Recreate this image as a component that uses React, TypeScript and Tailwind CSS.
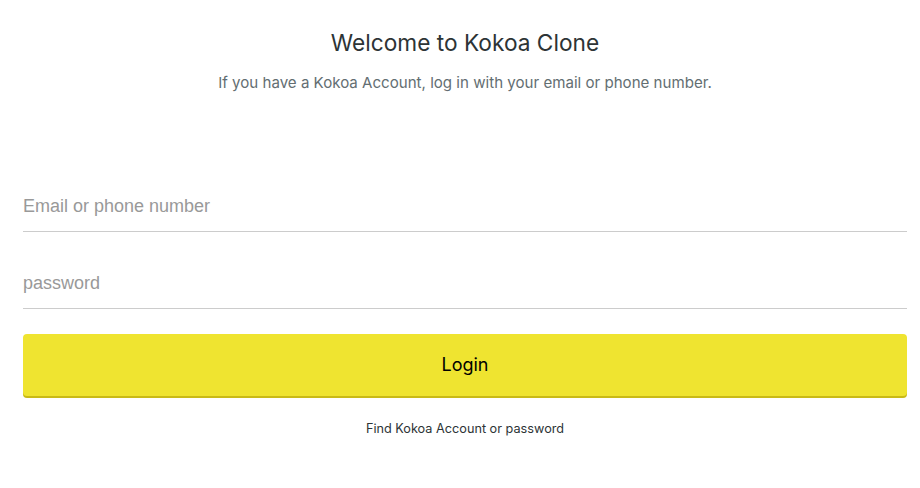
import React from "react";

export default function App() {
  return (
    <div className="min-h-screen bg-white font-['Inter',sans-serif]">
      <header className="ml-[23px] w-[884px] pt-[29px] text-center">
        <h1 className="text-[22.7px] leading-[28px] font-normal text-[#2d3436]">
          Welcome to Kokoa Clone
        </h1>
        <p className="mt-[16px] text-[15.1px] leading-[20px] text-[#636e72]">
          If you have a Kokoa Account, log in with your email or phone number.
        </p>
      </header>

      <form className="ml-[23px] mt-[94px] flex w-[884px] flex-col">
        <input
          type="text"
          placeholder="Email or phone number"
          className="h-[45px] border-b border-[#cccccc] pb-[6px] font-['Liberation_Sans',sans-serif] text-[18px] outline-none placeholder:text-[#999999]"
        />
        <input
          type="password"
          placeholder="password"
          className="mt-[32px] h-[45px] border-b border-[#cccccc] pb-[6px] font-['Liberation_Sans',sans-serif] text-[18px] outline-none placeholder:text-[#999999]"
        />
        <button
          type="submit"
          className="mt-[25px] h-[62px] rounded-[4px] bg-[#efe430] pb-[2px] text-[18px] text-black shadow-[0_2px_0_#c9ba16]"
        >
          Login
        </button>
        <a href="#" className="mt-[23px] text-center text-[12.7px] text-[#2d3436]">
          Find Kokoa Account or password
        </a>
      </form>
    </div>
  );
}
